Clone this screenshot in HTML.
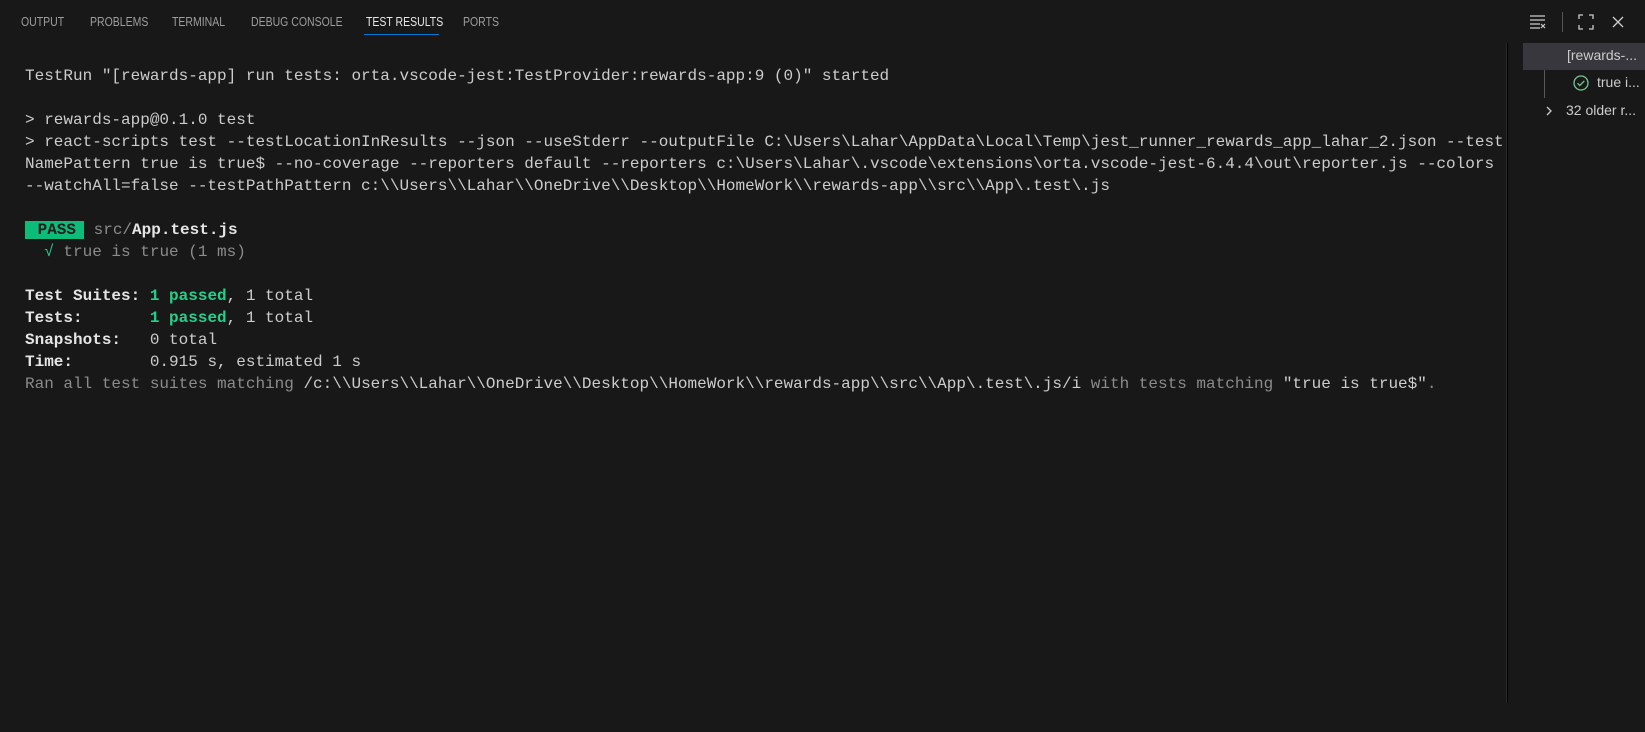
<!DOCTYPE html>
<html><head><meta charset="utf-8"><style>
html,body{margin:0;padding:0;background:#181818;width:1645px;height:732px;overflow:hidden;}
.tab{position:absolute;top:15px;font:12.5px "Liberation Sans",sans-serif;color:#9d9d9d;transform:scaleX(0.84);transform-origin:0 0;white-space:nowrap;}
.out{position:absolute;left:25px;top:65px;width:1480px;overflow:hidden;font:16px/22px "Liberation Mono",monospace;color:#cccccc;white-space:pre;}
.g{color:#23d18b;font-weight:bold}
.d{color:#8b8b8b}
.b{font-weight:bold;color:#e5e5e5}
.pass{background:#0dbc79;color:#1e1e1e;font-weight:bold;padding:0 8px 0 3px;}
.side{position:absolute;left:1506px;top:43px;width:139px;height:660px;border-left:1px solid #2b2b2b;background:#181818;font:14px "Liberation Sans",sans-serif;color:#cccccc;}
</style></head><body>
<div class="tab" style="left:21px">OUTPUT</div>
<div class="tab" style="left:90px">PROBLEMS</div>
<div class="tab" style="left:172px">TERMINAL</div>
<div class="tab" style="left:251px">DEBUG CONSOLE</div>
<div class="tab" style="left:366px;color:#e7e7e7">TEST RESULTS</div>
<div style="position:absolute;left:364px;top:34px;width:75px;height:1px;background:#0078d4"></div>
<div class="tab" style="left:463px">PORTS</div>

<svg style="position:absolute;left:1528px;top:12px" width="20" height="20" viewBox="0 0 20 20" fill="none" stroke="#cccccc" stroke-width="1.2">
<path d="M2 4h15M2 8h15M2 12h10M2 16h10M13 12l4 4M17 12l-4 4"/></svg>
<div style="position:absolute;left:1562px;top:12px;width:1px;height:20px;background:#555"></div>
<svg style="position:absolute;left:1577px;top:13px" width="18" height="18" viewBox="0 0 18 18" fill="none" stroke="#cccccc" stroke-width="1.3">
<path d="M2 6V2h4M12 2h4v4M16 12v4h-4M6 16H2v-4"/></svg>
<svg style="position:absolute;left:1610px;top:14px" width="16" height="16" viewBox="0 0 16 16" fill="none" stroke="#cccccc" stroke-width="1.3">
<path d="M3 3l10 10M13 3L3 13"/></svg>

<div class="out">TestRun "[rewards-app] run tests: orta.vscode-jest:TestProvider:rewards-app:9 (0)" started

&gt; rewards-app@0.1.0 test
&gt; react-scripts test --testLocationInResults --json --useStderr --outputFile C:\Users\Lahar\AppData\Local\Temp\jest_runner_rewards_app_lahar_2.json --test
NamePattern true is true$ --no-coverage --reporters default --reporters c:\Users\Lahar\.vscode\extensions\orta.vscode-jest-6.4.4\out\reporter.js --colors
--watchAll=false --testPathPattern c:\\Users\\Lahar\\OneDrive\\Desktop\\HomeWork\\rewards-app\\src\\App\.test\.js

<span class="pass"> PASS</span> <span class="d">src/</span><span class="b">App.test.js</span>
  <span style="color:#23d18b">√</span> <span class="d">true is true (1 ms)</span>

<span class="b">Test Suites: </span><span class="g">1 passed</span>, 1 total
<span class="b">Tests:       </span><span class="g">1 passed</span>, 1 total
<span class="b">Snapshots:   </span>0 total
<span class="b">Time:        </span>0.915 s, estimated 1 s
<span class="d">Ran all test suites matching </span>/c:\\Users\\Lahar\\OneDrive\\Desktop\\HomeWork\\rewards-app\\src\\App\.test\.js/i<span class="d"> with tests matching </span>"true is true$"<span class="d">.</span></div>

<div class="side">
<div style="position:absolute;left:0;top:0;width:1px;height:660px;background:#000"></div>
<div style="position:absolute;left:16px;top:0;width:123px;height:27px;background:#37373d"></div>
<div style="position:absolute;left:60px;top:4px;white-space:nowrap">[rewards-...</div>
<div style="position:absolute;left:37px;top:27px;width:1px;height:28px;background:#585858"></div>
<svg style="position:absolute;left:65px;top:31px" width="18" height="18" viewBox="0 0 18 18" fill="none" stroke="#73c991" stroke-width="1.3"><circle cx="9" cy="9" r="7"/><path d="M5.5 9.2l2.3 2.3 4.5-4.6"/></svg>
<div style="position:absolute;left:90px;top:31px;white-space:nowrap">true i...</div>
<svg style="position:absolute;left:36px;top:61px" width="12" height="14" viewBox="0 0 12 14" fill="none" stroke="#cccccc" stroke-width="1.3"><path d="M4 3l4 4-4 4"/></svg>
<div style="position:absolute;left:59px;top:59px;white-space:nowrap">32 older r...</div>
</div>
</body></html>
